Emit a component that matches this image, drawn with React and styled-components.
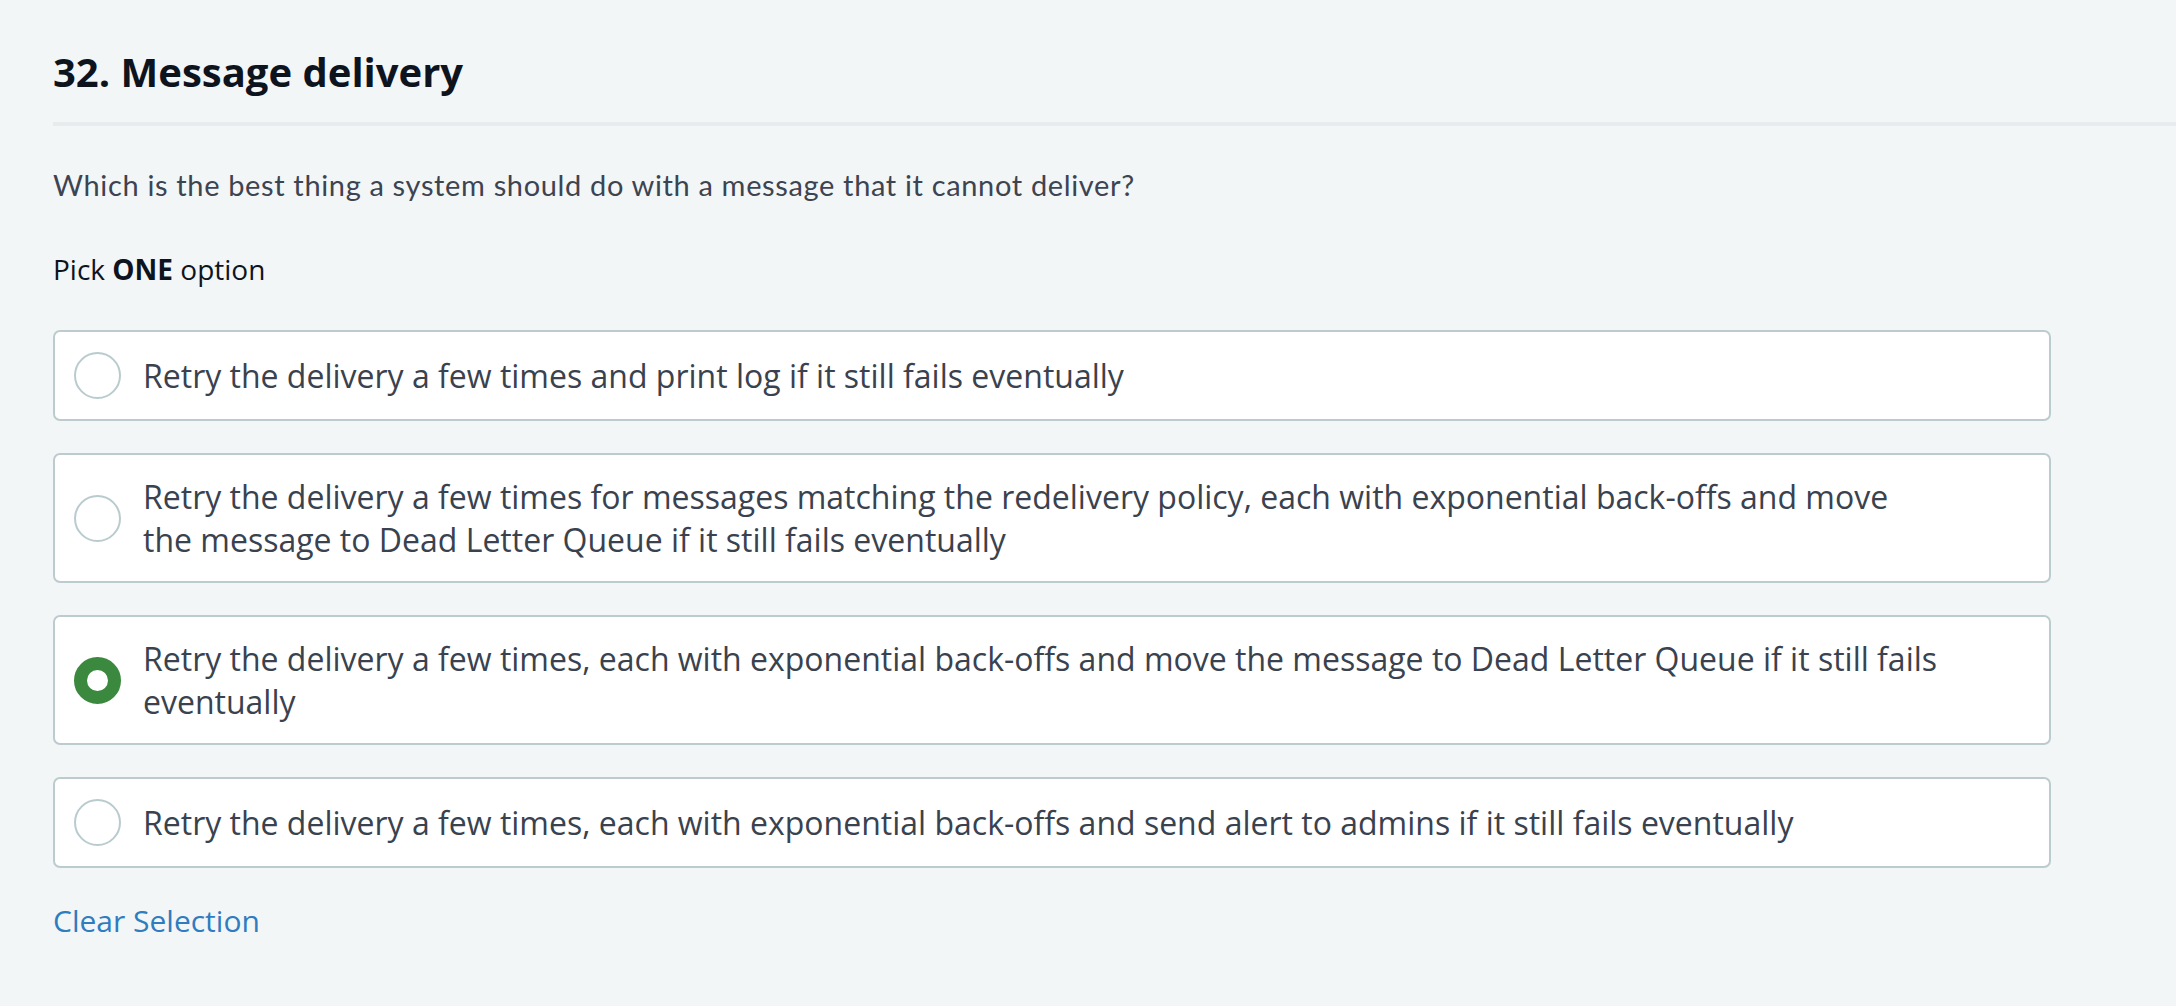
import React, { useState } from "react";
import styled, { createGlobalStyle } from "styled-components";

const GlobalStyle = createGlobalStyle`
  html, body {
    margin: 0;
    padding: 0;
    background: #f3f6f7;
  }
  body {
    font-family: "Open Sans", "Liberation Sans", sans-serif;
    color: #39424e;
  }
`;

const options = [
  "Retry the delivery a few times and print log if it still fails eventually",
  "Retry the delivery a few times for messages matching the redelivery policy, each with exponential back-offs and move the message to Dead Letter Queue if it still fails eventually",
  "Retry the delivery a few times, each with exponential back-offs and move the message to Dead Letter Queue if it still fails eventually",
  "Retry the delivery a few times, each with exponential back-offs and send alert to admins if it still fails eventually",
];

const App = () => {
  const [selected, setSelected] = useState(2);

  return (
    <>
      <GlobalStyle />
      <Page>
        <Header>
          <Title>32. Message delivery</Title>
        </Header>
        <Question>Which is the best thing a system should do with a message that it cannot deliver?</Question>
        <Hint>
          Pick <strong>ONE</strong> option
        </Hint>
        <OptionList>
          {options.map((text, i) => (
            <Option key={i} onClick={() => setSelected(i)}>
              <Radio $checked={selected === i} />
              <Label>{text}</Label>
            </Option>
          ))}
        </OptionList>
        <ClearLink onClick={() => setSelected(null)}>Clear Selection</ClearLink>
      </Page>
    </>
  );
};

const Page = styled.main`
  padding: 48px 0 0 53px;
  min-height: 100vh;
  box-sizing: border-box;
  overflow: hidden;
`;

const Header = styled.header`
  border-bottom: 4px solid #e7ebed;
  padding-bottom: 26px;
  margin-right: -20px;
`;

const Title = styled.h1`
  margin: 0;
  font-family: "Open Sans", sans-serif;
  font-weight: 700;
  font-size: 40px;
  line-height: 48px;
  color: #0e141e;
`;

const Question = styled.p`
  margin: 38px 0 0;
  font-family: Lato, "Open Sans", sans-serif;
  font-size: 29px;
  line-height: 42px;
  letter-spacing: 0.65px;
  color: #3d4451;
`;

const Hint = styled.p`
  margin: 42px 0 0;
  font-family: "Open Sans", sans-serif;
  font-size: 28px;
  line-height: 42px;
  color: #0e141e;

  strong {
    font-weight: 700;
  }
`;

const OptionList = styled.div`
  margin-top: 40px;
  width: 1998px;
  display: flex;
  flex-direction: column;
  gap: 32px;
`;

const Option = styled.label`
  display: flex;
  align-items: center;
  gap: 22px;
  padding: 20px 111px 20px 19px;
  background: #ffffff;
  border: 2px solid #bccbce;
  border-radius: 7px;
  cursor: pointer;
`;

const Radio = styled.span`
  flex: none;
  width: 47px;
  height: 47px;
  box-sizing: border-box;
  border-radius: 50%;
  background: #ffffff;
  border: ${(p) => (p.$checked ? "13px solid #3b893e" : "2px solid #b9cbce")};
`;

const Label = styled.span`
  font-family: "Open Sans", sans-serif;
  font-size: 32px;
  line-height: 43px;
  color: #39424e;
`;

const ClearLink = styled.a`
  display: inline-block;
  margin-top: 31px;
  font-family: "Open Sans", sans-serif;
  font-size: 30px;
  line-height: 43px;
  color: #2f7cc0;
  cursor: pointer;
`;

export default App;
